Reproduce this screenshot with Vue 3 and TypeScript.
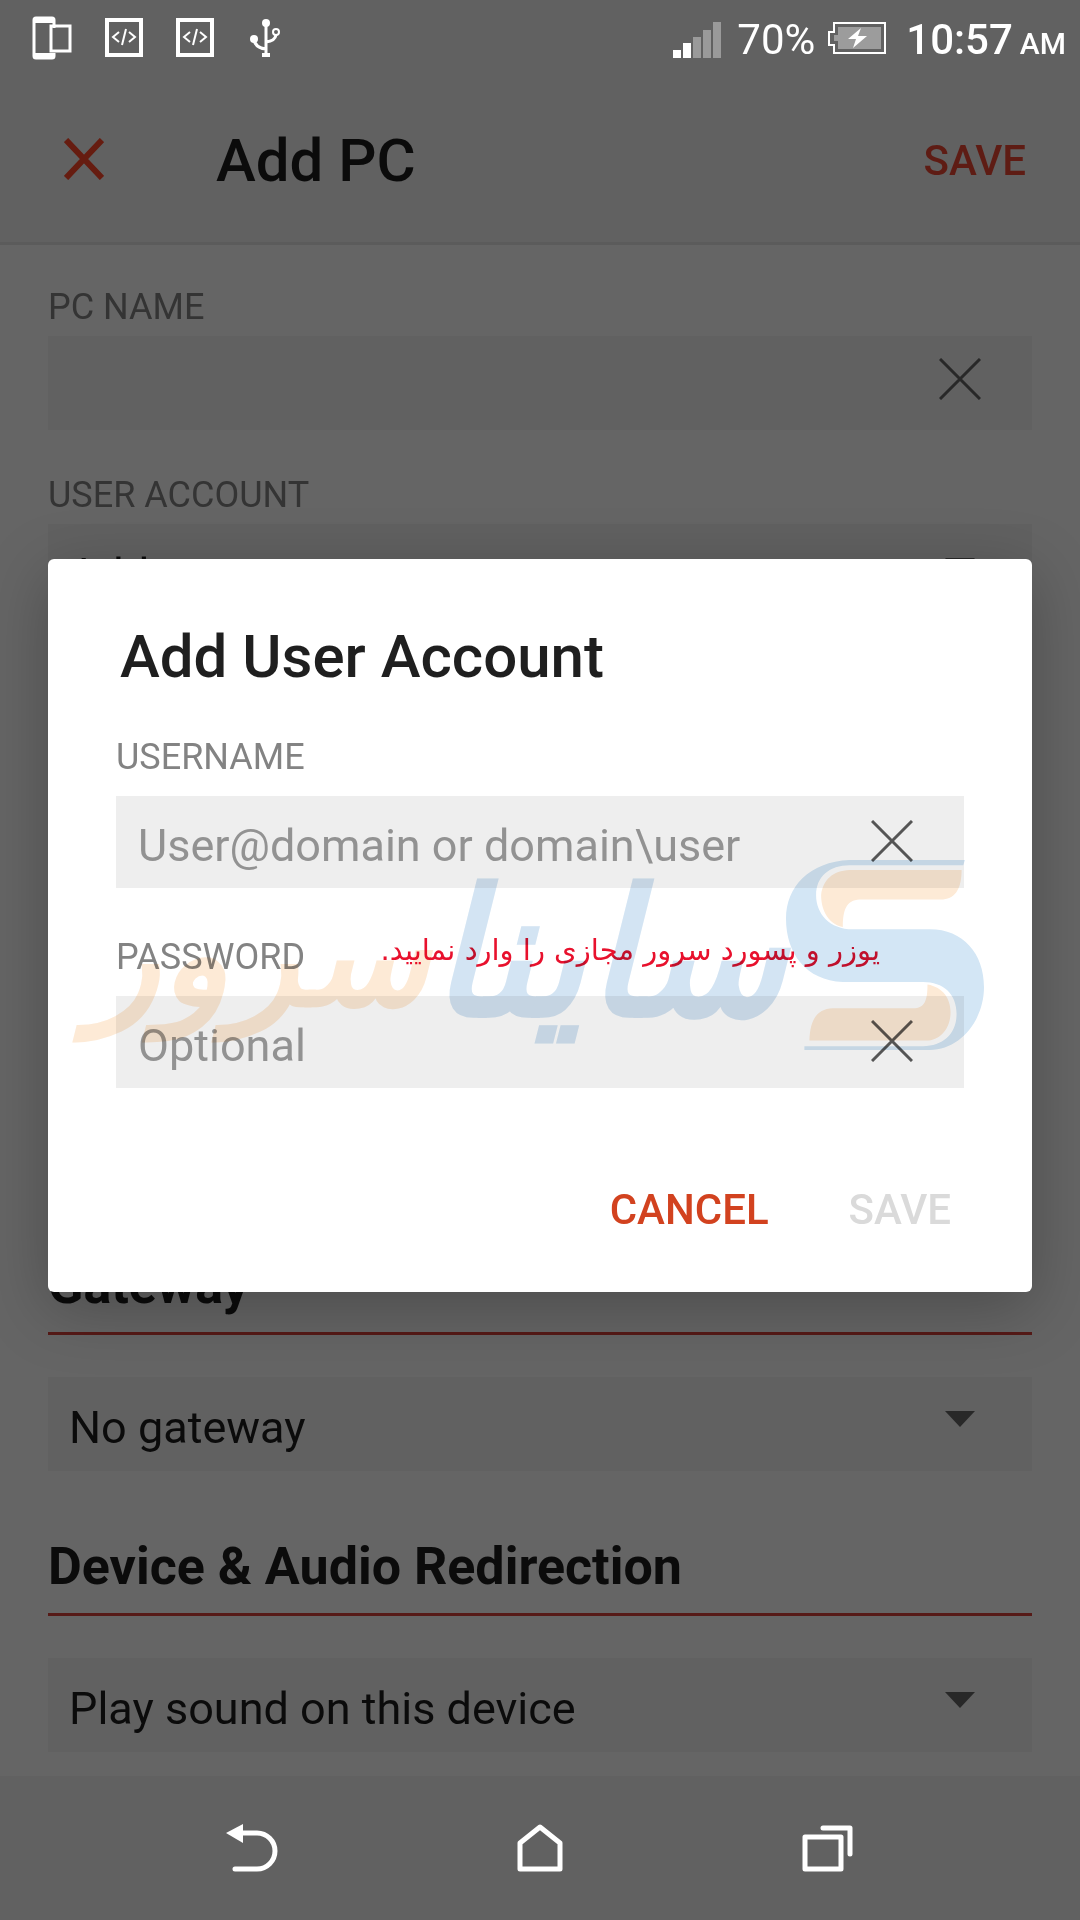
<script setup lang="ts">
import { ref } from 'vue'

const pcName = ref('')
const account = ref('Add user account')
const gateway = ref('No gateway')
const sound = ref('Play sound on this device')
const username = ref('')
const password = ref('')
</script>

<template>
  <div class="screen">
    <header class="status">
      <div class="status-left">
        <svg width="40" height="44" viewBox="0 0 40 44" fill="none" stroke="#fff">
          <path d="M22 12V4q0-2-2-2H4Q2 2 2 4v36q0 2 2 2h16q2 0 2-2v-3" stroke-width="3" />
          <path d="M2 4h20M2 40h20" stroke-width="6" />
          <rect x="19" y="10" width="19" height="25" stroke-width="3" />
        </svg>
        <svg v-for="n in 2" :key="n" class="code" width="38" height="39" viewBox="0 0 38 39" fill="none" stroke="#fff">
          <path d="M2 2h34v35H2z" stroke-width="4" />
          <path d="M14 14l-6 5 6 5M24 14l6 5-6 5M21 11l-4 16" stroke-width="2" />
        </svg>
        <svg class="usb" width="32" height="38" viewBox="0 0 32 38" fill="none" stroke="#fff" stroke-width="3">
          <path d="M16 4v32M4 20q1 9 12 10M26 16q-1 6-10 7" />
          <circle cx="16" cy="4" r="4" fill="#fff" stroke="none" />
          <circle cx="4" cy="20" r="4" fill="#fff" stroke="none" />
          <circle cx="26" cy="13" r="3" stroke-width="2" />
          <path d="M12 36h8" stroke-width="4" />
        </svg>
      </div>
      <div class="status-right">
        <svg width="48" height="36" viewBox="0 0 48 36">
          <path fill="#fff" d="M0 28h8v8H0zM10 21h8v15h-8z" />
          <path fill="#9a9a9a" d="M20 15h8v21h-8zM30 8h8v28h-8zM40 0h8v36h-8z" />
        </svg>
        <span class="percent">70%</span>
        <svg class="battery" width="58" height="32" viewBox="0 0 58 32">
          <path fill="none" stroke="#fff" stroke-width="2" d="M6 1h51v30H6v-8H1V10h5z" />
          <path fill="#9c9c9c" d="M10 5h43v22H10v-8H6v-6h4z" />
          <path fill="#fff" d="M33 6L20 17h8l-3 9 14-12h-9z" />
        </svg>
        <span class="time">10:57</span>
        <span class="ampm">AM</span>
      </div>
    </header>

    <div class="toolbar">
      <button class="icon-btn" type="button" aria-label="Close">
        <svg width="40" height="42" viewBox="0 0 40 42" stroke="#661c10" stroke-width="6"><path d="M2 2l36 38M38 2L2 40" /></svg>
      </button>
      <h1>Add PC</h1>
      <button class="save" type="button">SAVE</button>
    </div>

    <main class="form">
      <section>
        <label class="caption" for="pc">PC NAME</label>
        <div class="box">
          <input id="pc" v-model="pcName" type="text" />
          <button class="icon-btn clear" type="button" aria-label="Clear PC name">
            <svg width="42" height="42" viewBox="0 0 42 42" stroke="#282828" stroke-width="3"><path d="M1 1l40 40M41 1L1 41" /></svg>
          </button>
        </div>
        <label class="caption second" for="account">USER ACCOUNT</label>
        <div class="box">
          <select id="account" v-model="account"><option>Add user account</option></select>
          <svg class="arrow" width="30" height="16" viewBox="0 0 30 16"><path fill="#282828" d="M0 0h30L15 16z" /></svg>
        </div>
      </section>

      <section>
        <h2><label for="gateway">Gateway</label></h2>
        <div class="box">
          <select id="gateway" v-model="gateway"><option>No gateway</option></select>
          <svg class="arrow" width="30" height="16" viewBox="0 0 30 16"><path fill="#282828" d="M0 0h30L15 16z" /></svg>
        </div>
        <h2 class="next"><label for="sound">Device &amp; Audio Redirection</label></h2>
        <div class="box">
          <select id="sound" v-model="sound"><option>Play sound on this device</option></select>
          <svg class="arrow" width="30" height="16" viewBox="0 0 30 16"><path fill="#282828" d="M0 0h30L15 16z" /></svg>
        </div>
      </section>
    </main>

    <nav class="nav">
      <button class="icon-btn" type="button" aria-label="Back">
        <svg width="52" height="48" viewBox="0 0 52 48">
          <path fill="#fff" d="M0 9L17 0v19z" />
          <path fill="none" stroke="#fff" stroke-width="5" stroke-linecap="round" d="M16 9h15a17 17 0 0 1 0 36H9" />
        </svg>
      </button>
      <button class="icon-btn" type="button" aria-label="Home">
        <svg width="46" height="48" viewBox="0 0 46 48" fill="none" stroke="#fff" stroke-width="5" stroke-linejoin="round">
          <path d="M3 45V19L23 3l20 16v26z" />
        </svg>
      </button>
      <button class="icon-btn" type="button" aria-label="Recent apps">
        <svg width="52" height="48" viewBox="0 0 52 48" fill="none" stroke="#fff" stroke-width="5" stroke-linejoin="round" stroke-linecap="round">
          <path d="M3 13h36v32H3zM21 4h27v26" />
        </svg>
      </button>
    </nav>

    <div class="overlay">
      <form class="dialog" role="dialog" aria-labelledby="dialog-title" @submit.prevent>
        <h3 id="dialog-title">Add User Account</h3>
        <div class="label-row">
          <label for="user">USERNAME</label>
        </div>
        <div class="entry">
          <input id="user" v-model="username" type="text" placeholder="User@domain or domain\user" />
          <button class="icon-btn clear" type="button" aria-label="Clear username">
            <svg width="42" height="42" viewBox="0 0 42 42" stroke="#555" stroke-width="3"><path d="M1 1l40 40M41 1L1 41" /></svg>
          </button>
        </div>
        <div class="label-row second-row">
          <label for="pass">PASSWORD</label>
          <p class="note" dir="rtl" lang="fa">یوزر و پسورد سرور مجازی را وارد نمایید.</p>
        </div>
        <div class="entry">
          <input id="pass" v-model="password" type="password" placeholder="Optional" />
          <button class="icon-btn clear" type="button" aria-label="Clear password">
            <svg width="42" height="42" viewBox="0 0 42 42" stroke="#555" stroke-width="3"><path d="M1 1l40 40M41 1L1 41" /></svg>
          </button>
        </div>
        <div class="actions">
          <button class="cancel" type="button">CANCEL</button>
          <button class="confirm" type="submit" disabled>SAVE</button>
        </div>

        <div class="watermark" dir="rtl" lang="fa">
          <svg width="198" height="190" viewBox="680 240 592 568">
            <path fill="#d3e6f5" d="M1215 240H870C750 245 680 320 680 415C680 520 740 600 850 605H1090C1150 605 1190 640 1190 700C1190 760 1150 795 1090 797H735V808H1110C1200 808 1272 720 1272 620C1272 520 1210 447 1110 447H880C810 447 770 400 770 345C770 290 810 256 870 256H1210Z" />
            <path fill="#fdead6" d="M1205 270C1205 320 1190 355 1150 358H900C860 360 850 390 850 440C800 430 785 380 785 345C790 300 820 272 870 270Z" />
            <path fill="#fdead6" d="M750 780C752 720 770 685 820 683H1060C1095 683 1103 660 1103 612C1150 620 1172 655 1172 695C1172 745 1140 780 1100 780Z" />
          </svg>
          <span class="word blue">ساینا</span>
          <span class="word orange">سرور</span>
        </div>
      </form>
    </div>
  </div>
</template>

<style>
body {
  margin: 0;
  background: #656565;
}
</style>

<style scoped>
.screen {
  position: relative;
  display: flex;
  flex-direction: column;
  min-height: 100vh;
  background: #656565;
  font-family: Roboto, "Liberation Sans", sans-serif;
}
* {
  box-sizing: border-box;
}
h1, h2, h3, p {
  margin: 0;
}
svg {
  display: block;
  flex: none;
}
button, input, select {
  margin: 0;
  padding: 0;
  border: 0;
  background: none;
  font-family: inherit;
}
.icon-btn {
  flex: none;
}
.status {
  display: flex;
  justify-content: space-between;
  height: 75px;
  padding: 0 14px 0 32px;
  background: #616161;
  color: #fff;
}
.status-left, .status-right {
  display: flex;
  align-items: center;
}
.code {
  margin-left: 33px;
}
.usb {
  margin-left: 36px;
}
.percent {
  margin: 0 13px 0 16px;
  font-size: 42px;
  line-height: 52px;
}
.time {
  margin: 0 7px 0 20px;
  font-size: 42px;
  font-weight: 500;
  line-height: 52px;
}
.status-right {
  align-items: flex-start;
  padding-top: 14px;
}
.status-right svg {
  margin-top: 8px;
}
.ampm {
  font-size: 30px;
  font-weight: 500;
  line-height: 60px;
}
.toolbar {
  display: flex;
  align-items: center;
  height: 170px;
  padding: 0 54px 0 64px;
  border-bottom: 3px solid #5b5b5b;
  background: #616161;
}
h1 {
  flex: 1;
  margin-left: 112px;
  padding-top: 5px;
  color: #0b0b0b;
  font-size: 60px;
  font-weight: 500;
  line-height: 72px;
}
.save {
  padding-top: 5px;
  color: #5e1c14;
  font-size: 42px;
  font-weight: 500;
  line-height: 60px;
}
.form {
  display: flex;
  flex: 1;
  flex-direction: column;
  justify-content: space-between;
  padding: 40px 48px 24px;
}
.caption {
  display: block;
  margin-bottom: 7px;
  color: #343434;
  font-size: 36px;
  line-height: 44px;
}
.second {
  margin-top: 43px;
}
.box {
  position: relative;
  display: flex;
  align-items: center;
  height: 94px;
  background: #616161;
}
.box input, .entry input {
  flex: 1;
  min-width: 0;
  height: 100%;
  padding: 6px 20px 0 22px;
  outline: 0;
  font-size: 45px;
}
.box .clear {
  margin: 0 51px 8px 0;
}
select {
  width: 100%;
  height: 100%;
  padding: 6px 100px 0 21px;
  appearance: none;
  color: #0b0b0b;
  font-size: 45px;
}
.arrow {
  position: absolute;
  right: 57px;
  top: 34px;
  pointer-events: none;
}
h2 {
  margin-bottom: 42px;
  padding-bottom: 16px;
  border-bottom: 3px solid #561a17;
  color: #0b0b0b;
  font-size: 52px;
  font-weight: 700;
  line-height: 60px;
}
.next {
  margin-top: 66px;
}
.nav {
  display: flex;
  align-items: center;
  justify-content: center;
  gap: 239px;
  height: 144px;
  background: #616161;
}
.overlay {
  position: absolute;
  inset: 75px 0 144px;
  display: flex;
  align-items: center;
  padding: 0 48px;
}
.dialog {
  position: relative;
  flex: 1;
  padding: 62px 68px 52px;
  border-radius: 6px;
  background: #fff;
  box-shadow: 0 16px 64px rgba(0, 0, 0, 0.25);
}
h3 {
  margin: 0 0 42px 4px;
  color: #1f1f1f;
  font-size: 60px;
  font-weight: 500;
  line-height: 72px;
}
.label-row {
  display: flex;
  justify-content: space-between;
  height: 44px;
  margin-bottom: 17px;
  padding-right: 84px;
  color: #838383;
  font-size: 36px;
  line-height: 44px;
}
.second-row {
  margin-top: 47px;
}
.note {
  color: #e8112d;
  font-family: "DejaVu Sans", sans-serif;
  font-size: 29px;
  line-height: 30px;
}
.entry {
  display: flex;
  align-items: center;
  height: 92px;
  background: #eee;
}
.entry input::placeholder {
  color: #929292;
  opacity: 1;
}
.entry .clear {
  margin: 0 51px 2px 0;
}
.actions {
  display: flex;
  justify-content: flex-end;
  gap: 80px;
  margin-top: 92px;
  padding-right: 13px;
}
.actions button {
  font-size: 42px;
  font-weight: 500;
  line-height: 60px;
}
.cancel {
  color: #d2421f;
}
.confirm {
  color: #dadada;
}
.watermark {
  position: absolute;
  inset: 301px 48px auto;
  display: flex;
  height: 190px;
  mix-blend-mode: multiply;
  pointer-events: none;
}
.word {
  font-family: "DejaVu Sans", sans-serif;
  font-style: italic;
  font-weight: 700;
  line-height: 190px;
}
.blue {
  color: #d3e4f3;
  font-size: 176px;
}
.orange {
  color: #fdead6;
  font-size: 144px;
}
</style>
